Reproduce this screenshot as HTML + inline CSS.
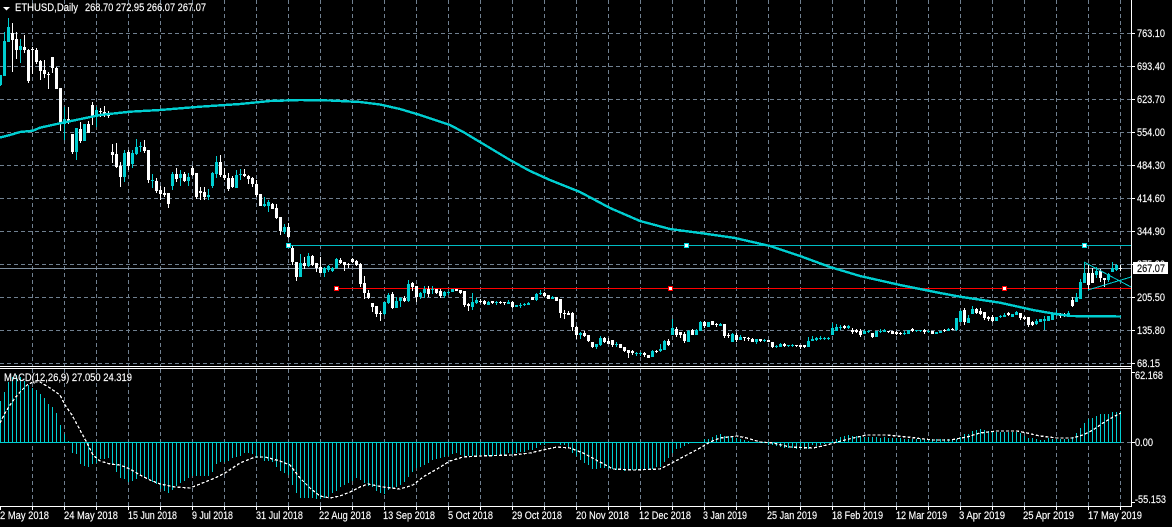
<!DOCTYPE html>
<html lang="en">
<head>
<meta charset="utf-8">
<title>ETHUSD,Daily</title>
<style>
html,body{margin:0;padding:0;background:#000;width:1172px;height:527px;overflow:hidden}
svg{display:block}
text{font-family:"Liberation Sans",sans-serif;font-size:11px;fill:#fff;stroke:#fff;stroke-width:.15}
</style>
</head>
<body>
<svg width="1172" height="527" viewBox="0 0 1172 527" xmlns="http://www.w3.org/2000/svg">
<rect width="1172" height="527" fill="#000"/>
<g shape-rendering="crispEdges" fill="none">
<!-- grid -->
<path stroke="#708090" stroke-dasharray="4 3" d="M32.5 0V366M64.5 0V366M96.5 0V366M128.5 0V366M160.5 0V366M192.5 0V366M224.5 0V366M256.5 0V366M288.5 0V366M320.5 0V366M352.5 0V366M384.5 0V366M416.5 0V366M448.5 0V366M480.5 0V366M512.5 0V366M544.5 0V366M576.5 0V366M608.5 0V366M640.5 0V366M672.5 0V366M704.5 0V366M736.5 0V366M768.5 0V366M800.5 0V366M832.5 0V366M864.5 0V366M896.5 0V366M928.5 0V366M960.5 0V366M992.5 0V366M1024.5 0V366M1056.5 0V366M1088.5 0V366M1120.5 0V366M32.5 369V506M64.5 369V506M96.5 369V506M128.5 369V506M160.5 369V506M192.5 369V506M224.5 369V506M256.5 369V506M288.5 369V506M320.5 369V506M352.5 369V506M384.5 369V506M416.5 369V506M448.5 369V506M480.5 369V506M512.5 369V506M544.5 369V506M576.5 369V506M608.5 369V506M640.5 369V506M672.5 369V506M704.5 369V506M736.5 369V506M768.5 369V506M800.5 369V506M832.5 369V506M864.5 369V506M896.5 369V506M928.5 369V506M960.5 369V506M992.5 369V506M1024.5 369V506M1056.5 369V506M1088.5 369V506M1120.5 369V506"/>
<path stroke="#708090" stroke-dasharray="4 3" d="M0 33.5H1131M0 66.5H1131M0 99.5H1131M0 132.5H1131M0 165.5H1131M0 198.5H1131M0 231.5H1131M0 264.5H1131M0 297.5H1131M0 330.5H1131M0 363.5H1131M1120 442.5H1131"/>
<!-- horizontal objects -->
<path stroke="#8090a0" d="M0 268.5H1131"/>
<path stroke="#00bcc4" d="M288 245.5H1131"/>
<path stroke="#ff0000" d="M336 288.5H1131"/>
<!-- white candles: wicks -->
<path stroke="#fff" d="M12.5 23V72M16.5 32V59M24.5 35V53M28.5 49V83M32.5 47V74M36.5 48V64M40.5 60V80M44.5 60V78M48.5 72V89M52.5 57V73M56.5 67V89M60.5 88V131M68.5 107V124M72.5 134V154M80.5 122V143M88.5 121V133M92.5 102V125M100.5 108V117M104.5 106V117M108.5 111V118M112.5 144V163M116.5 143V168M120.5 162V187M128.5 150V170M144.5 140V153M148.5 150V183M156.5 178V193M160.5 186V200M164.5 187V197M168.5 193V208M176.5 168V182M184.5 172V182M192.5 166V176M196.5 173V199M200.5 187V200M204.5 187V200M220.5 155V177M224.5 168V180M228.5 173V191M232.5 176V188M244.5 169V177M248.5 175V184M252.5 177V187M256.5 180V197M260.5 194V206M272.5 203V209M276.5 204V219M280.5 217V235M288.5 223V238M292.5 246V265M296.5 262V281M304.5 257V269M312.5 255V266M316.5 263V272M320.5 257V273M340.5 258V264M344.5 262V271M348.5 263V268M352.5 258V263M356.5 260V266M360.5 263V287M364.5 276V299M368.5 290V299M372.5 303V312M376.5 306V317M380.5 311V321M392.5 292V309M404.5 296V302M412.5 282V291M416.5 286V302M428.5 286V297M436.5 289V294M440.5 289V298M456.5 289V291M460.5 290V294M464.5 291V307M468.5 303V311M480.5 299V303M484.5 300V305M492.5 301V304M500.5 301V304M504.5 302V305M512.5 301V308M532.5 297V300M544.5 292V297M548.5 295V299M556.5 297V301M560.5 299V318M564.5 310V319M568.5 311V315M572.5 312V331M576.5 326V339M584.5 331V337M588.5 335V342M592.5 342V348M604.5 337V343M608.5 338V344M612.5 340V347M620.5 344V348M624.5 347V352M628.5 350V358M632.5 350V355M644.5 352V357M648.5 355V358M656.5 350V353M668.5 339V346M676.5 327V337M680.5 332V338M684.5 332V343M692.5 329V335M704.5 321V328M712.5 321V325M716.5 323V327M724.5 324V338M728.5 333V338M736.5 333V342M744.5 337V341M748.5 337V341M752.5 338V342M760.5 339V342M768.5 340V342M772.5 342V348M784.5 343V347M796.5 345V347M800.5 345V349M804.5 345V348M844.5 325V329M852.5 328V334M856.5 329V333M860.5 329V337M872.5 333V338M888.5 331V333M892.5 331V334M896.5 331V335M900.5 332V335M912.5 328V332M924.5 329V334M932.5 331V334M944.5 329V332M952.5 328V330M964.5 308V325M976.5 308V314M980.5 308V315M984.5 312V320M988.5 316V321M992.5 315V322M1008.5 312V316M1020.5 313V320M1024.5 316V320M1028.5 317V327M1032.5 321V326M1060.5 313V318M1064.5 313V317M1072.5 297V307M1088.5 265V289M1092.5 268V283M1100.5 269V282M1104.5 278V287M1120.5 265V271"/>
<!-- white candles: bodies -->
<path stroke="#fff" stroke-width="3" d="M12.5 33V40M16.5 39V50M24.5 47V50M28.5 50V81M32.5 49V50M36.5 50V62M40.5 61V71M44.5 70V74M48.5 74V75M52.5 57V68M56.5 68V89M60.5 88V122M68.5 119V122M72.5 134V152M80.5 129V141M88.5 124V133M92.5 105V117M100.5 111V112M104.5 112V115M108.5 114V116M112.5 152V155M116.5 154V167M120.5 166V177M128.5 152V166M144.5 147V151M148.5 150V180M156.5 181V191M160.5 190V194M164.5 193V195M168.5 193V204M176.5 174V179M184.5 174V181M192.5 168V175M196.5 173V197M200.5 191V193M204.5 192V197M220.5 162V175M224.5 175V178M228.5 178V189M232.5 178V187M244.5 174V176M248.5 176V179M252.5 178V184M256.5 184V195M260.5 194V206M272.5 204V209M276.5 208V218M280.5 217V231M288.5 227V237M292.5 248V262M296.5 262V277M304.5 263V266M312.5 256V265M316.5 263V268M320.5 267V273M340.5 260V263M344.5 262V265M348.5 264V265M352.5 259V262M356.5 261V265M360.5 264V284M364.5 283V293M368.5 293V298M372.5 303V307M376.5 306V314M380.5 313V314M392.5 294V308M404.5 298V301M412.5 283V287M416.5 286V297M428.5 289V294M436.5 289V293M440.5 291V296M456.5 289V291M460.5 290V293M464.5 291V305M468.5 304V306M480.5 301V302M484.5 301V304M492.5 301V303M500.5 302V303M504.5 302V303M512.5 302V307M532.5 297V300M544.5 293V296M548.5 295V299M556.5 297V301M560.5 299V313M564.5 313V314M568.5 313V315M572.5 313V327M576.5 327V335M584.5 333V336M588.5 335V341M592.5 342V347M604.5 338V342M608.5 341V344M612.5 340V345M620.5 344V348M624.5 347V351M628.5 350V353M632.5 351V353M644.5 353V355M648.5 355V358M656.5 351V352M668.5 341V345M676.5 329V335M680.5 332V335M684.5 334V341M692.5 330V335M704.5 322V326M712.5 321V325M716.5 324V325M724.5 324V336M728.5 335V336M736.5 335V340M744.5 337V338M748.5 338V339M752.5 339V342M760.5 339V341M768.5 340V342M772.5 342V347M784.5 344V346M796.5 345V346M800.5 345V347M804.5 345V347M844.5 326V328M852.5 330V332M856.5 330V332M860.5 331V335M872.5 333V337M888.5 331V332M892.5 331V334M896.5 332V334M900.5 333V334M912.5 329V331M924.5 330V332M932.5 331V334M944.5 330V331M952.5 329V330M964.5 310V322M976.5 309V313M980.5 311V314M984.5 312V318M988.5 317V319M992.5 317V321M1008.5 313V315M1020.5 313V318M1024.5 317V319M1028.5 317V325M1032.5 322V325M1060.5 314V316M1064.5 315V316M1072.5 300V306M1088.5 273V285M1092.5 273V283M1100.5 271V278M1104.5 278V280M1120.5 268V269"/>
<!-- cyan candles: wicks -->
<path stroke="#00ced1" d="M.5 75V86M4.5 32V76M8.5 18V42M20.5 39V63M64.5 107V140M76.5 128V160M84.5 124V141M96.5 107V127M124.5 150V182M132.5 150V168M136.5 139V155M140.5 142V152M152.5 174V188M172.5 172V190M180.5 170V186M188.5 173V186M208.5 189V200M212.5 172V188M216.5 156V178M236.5 170V188M240.5 169V180M264.5 197V207M268.5 200V212M284.5 224V234M300.5 254V277M308.5 253V267M324.5 267V277M328.5 265V272M332.5 267V272M336.5 258V269M384.5 302V315M388.5 293V304M396.5 297V308M400.5 297V307M408.5 280V302M420.5 292V299M424.5 286V298M432.5 286V294M444.5 291V298M448.5 291V295M452.5 289V292M472.5 293V310M476.5 298V304M488.5 301V305M496.5 301V305M508.5 300V304M516.5 305V307M520.5 303V308M524.5 303V306M528.5 302V305M536.5 293V301M540.5 290V295M552.5 296V299M580.5 332V339M596.5 344V349M600.5 336V346M616.5 342V347M636.5 352V356M640.5 352V356M652.5 350V357M660.5 344V352M664.5 340V350M672.5 319V335M688.5 330V342M696.5 329V335M700.5 321V331M708.5 322V327M720.5 323V326M732.5 333V342M740.5 335V340M756.5 339V344M764.5 339V342M776.5 345V348M780.5 343V347M788.5 345V347M792.5 344V347M808.5 337V347M812.5 336V341M816.5 337V341M820.5 336V340M824.5 337V340M828.5 337V340M832.5 323V335M836.5 324V331M840.5 325V330M848.5 325V329M864.5 330V334M868.5 330V333M876.5 331V337M880.5 329V333M884.5 329V332M904.5 331V335M908.5 330V334M916.5 330V332M920.5 330V332M928.5 330V333M936.5 332V334M940.5 331V333M948.5 328V331M956.5 318V331M960.5 310V322M968.5 315V323M972.5 306V314M996.5 317V321M1000.5 315V318M1004.5 313V317M1012.5 314V317M1016.5 311V315M1036.5 319V325M1040.5 319V322M1044.5 316V330M1048.5 316V321M1052.5 313V320M1056.5 310V316M1068.5 311V316M1076.5 293V302M1080.5 279V299M1084.5 262V283M1096.5 267V278M1108.5 273V282M1112.5 262V272M1116.5 264V271"/>
<!-- cyan candles: bodies -->
<path stroke="#00ced1" stroke-width="3" d="M.5 75V85M4.5 41V76M8.5 27V42M20.5 46V50M64.5 119V124M76.5 128V152M84.5 124V141M96.5 110V117M124.5 153V177M132.5 153V164M136.5 147V154M140.5 146V147M152.5 180V181M172.5 174V186M180.5 174V178M188.5 177V181M208.5 195V197M212.5 173V186M216.5 162V174M236.5 175V188M240.5 174V175M264.5 204V206M268.5 202V206M284.5 227V232M300.5 263V277M308.5 256V266M324.5 268V273M328.5 266V270M332.5 268V271M336.5 259V268M384.5 302V314M388.5 295V303M396.5 301V308M400.5 298V301M408.5 284V301M420.5 293V297M424.5 289V293M432.5 289V290M444.5 292V296M448.5 292V293M452.5 289V292M472.5 302V307M476.5 300V303M488.5 302V305M496.5 302V303M508.5 302V304M516.5 305V307M520.5 305V306M524.5 304V305M528.5 303V305M536.5 294V300M540.5 293V294M552.5 297V299M580.5 333V335M596.5 344V347M600.5 338V345M616.5 344V345M636.5 353V354M640.5 353V354M652.5 351V357M660.5 349V351M664.5 341V350M672.5 328V335M688.5 331V342M696.5 330V335M700.5 322V331M708.5 322V327M720.5 324V326M732.5 334V342M740.5 337V340M756.5 339V342M764.5 340V341M776.5 346V347M780.5 344V347M788.5 345V346M792.5 345V346M808.5 341V347M812.5 339V341M816.5 338V340M820.5 338V339M824.5 338V339M828.5 338V339M832.5 328V335M836.5 327V331M840.5 327V328M848.5 326V328M864.5 331V334M868.5 331V332M876.5 331V337M880.5 331V332M884.5 330V332M904.5 333V334M908.5 330V334M916.5 330V331M920.5 330V331M928.5 331V332M936.5 332V334M940.5 331V333M948.5 329V331M956.5 318V330M960.5 311V322M968.5 318V323M972.5 309V314M996.5 317V321M1000.5 316V317M1004.5 315V317M1012.5 314V317M1016.5 312V315M1036.5 321V324M1040.5 319V322M1044.5 319V321M1048.5 316V321M1052.5 313V320M1056.5 313V315M1068.5 313V315M1076.5 297V302M1080.5 282V299M1084.5 273V283M1096.5 271V275M1108.5 274V280M1112.5 268V272M1116.5 265V270"/>
<!-- moving average -->
<polyline stroke="#00ced1" stroke-width="2.4" points="0,137.5 10,135 20,132 33,130.7 40,127.7 60,123.3 100,115 130,111.7 160,110 200,106.7 240,104 270,101 300,100 330,100.5 360,102 380,104.5 400,109 420,115 450,125 465,133 480,142 510,160 530,171 550,180 580,192 610,208 640,221 670,229 700,233 735,238 770,246 800,256 830,267 860,276 900,285 940,293 960,296.7 1000,302.7 1033,310 1050,313 1070,316 1121,316.5"/>
<!-- triangle -->
<path stroke="#00ced1" d="M1084 262L1131 287M1088 290L1131 277"/>
<!-- object anchors -->
<path fill="#fff" stroke="#00e0e6" d="M286.5 243.5h4v4h-4zM684.5 243.5h4v4h-4zM1082.5 243.5h4v4h-4z"/>
<path fill="#fff" stroke="#ff0000" d="M334.5 286.5h4v4h-4zM668.5 286.5h4v4h-4zM1002.5 286.5h4v4h-4z"/>
<!-- separators -->
<path stroke="#fff" d="M0 366.5H1132M0 368.5H1132M0 506.5H1132M1131.5 0V507"/>
<path stroke="#fff" d="M1131 33.5h4M1131 66.5h4M1131 99.5h4M1131 132.5h4M1131 165.5h4M1131 198.5h4M1131 231.5h4M1131 264.5h4M1131 297.5h4M1131 330.5h4M1131 363.5h4M1131 372.5h4M1131 442.5h4M1131 502.5h4"/>
<path stroke="#fff" d="M.5 506V510M32.5 506V510M64.5 506V510M96.5 506V510M128.5 506V510M160.5 506V510M192.5 506V510M224.5 506V510M256.5 506V510M288.5 506V510M320.5 506V510M352.5 506V510M384.5 506V510M416.5 506V510M448.5 506V510M480.5 506V510M512.5 506V510M544.5 506V510M576.5 506V510M608.5 506V510M640.5 506V510M672.5 506V510M704.5 506V510M736.5 506V510M768.5 506V510M800.5 506V510M832.5 506V510M864.5 506V510M896.5 506V510M928.5 506V510M960.5 506V510M992.5 506V510M1024.5 506V510M1056.5 506V510M1088.5 506V510M1120.5 506V510"/>
<!-- MACD -->
<path stroke="#00ced1" d="M0 442.5H1121M.5 442V401M4.5 442V392M8.5 442V382M12.5 442V377M16.5 442V375M20.5 442V377M24.5 442V381M28.5 442V385M32.5 442V388M36.5 442V390M40.5 442V394M44.5 442V398M48.5 442V404M52.5 442V407M56.5 442V413M60.5 442V425M64.5 442V434M68.5 442V441M72.5 442V453M76.5 442V454M80.5 442V464M84.5 442V466M88.5 442V467M92.5 442V464M96.5 442V463M100.5 442V459M104.5 442V459M108.5 442V458M112.5 442V464M116.5 442V472M120.5 442V478M124.5 442V479M128.5 442V482M132.5 442V481M136.5 442V479M140.5 442V476M144.5 442V478M148.5 442V479M152.5 442V482M156.5 442V484M160.5 442V489M164.5 442V491M168.5 442V493M172.5 442V490M176.5 442V486M180.5 442V483M184.5 442V481M188.5 442V478M192.5 442V476M196.5 442V476M200.5 442V476M204.5 442V476M208.5 442V476M212.5 442V472M216.5 442V464M220.5 442V462M224.5 442V462M228.5 442V461M232.5 442V458M236.5 442V457M240.5 442V456M244.5 442V453M248.5 442V453M252.5 442V454M256.5 442V458M260.5 442V458M264.5 442V461M268.5 442V461M272.5 442V462M276.5 442V467M280.5 442V471M284.5 442V473M288.5 442V475M292.5 442V485M296.5 442V493M300.5 442V498M304.5 442V498M308.5 442V498M312.5 442V498M316.5 442V499M320.5 442V499M324.5 442V498M328.5 442V497M332.5 442V493M336.5 442V491M340.5 442V487M344.5 442V485M348.5 442V483M352.5 442V481M356.5 442V478M360.5 442V480M364.5 442V483M368.5 442V486M372.5 442V487M376.5 442V491M380.5 442V493M384.5 442V494M388.5 442V490M392.5 442V488M396.5 442V487M400.5 442V485M404.5 442V482M408.5 442V477M412.5 442V472M416.5 442V468M420.5 442V467M424.5 442V465M428.5 442V463M432.5 442V460M436.5 442V459M440.5 442V458M444.5 442V457M448.5 442V456M452.5 442V454M456.5 442V453M460.5 442V455M464.5 442V456M468.5 442V456M472.5 442V456M476.5 442V456M480.5 442V456M484.5 442V455M488.5 442V456M492.5 442V456M496.5 442V456M500.5 442V455M504.5 442V455M508.5 442V453M512.5 442V454M516.5 442V453M520.5 442V452M524.5 442V452M528.5 442V450M532.5 442V450M536.5 442V448M540.5 442V445M544.5 442V445M548.5 442V443M552.5 442V443M556.5 442V443M560.5 442V445M564.5 442V445M568.5 442V447M572.5 442V453M576.5 442V456M580.5 442V460M584.5 442V463M588.5 442V465M592.5 442V469M596.5 442V469M600.5 442V468M604.5 442V468M608.5 442V469M612.5 442V469M616.5 442V470M620.5 442V470M624.5 442V471M628.5 442V470M632.5 442V470M636.5 442V470M640.5 442V470M644.5 442V469M648.5 442V469M652.5 442V469M656.5 442V467M660.5 442V467M664.5 442V462M668.5 442V458M672.5 442V453M676.5 442V449M680.5 442V448M684.5 442V446M688.5 442V444M692.5 442V443M696.5 442V443M700.5 442V442M704.5 442V439M708.5 442V439M712.5 442V437M716.5 442V435M720.5 442V434M724.5 442V436M728.5 442V436M732.5 442V437M736.5 442V438M740.5 442V439M744.5 442V440M748.5 442V441M752.5 442V443M756.5 442V443M760.5 442V443M764.5 442V443M768.5 442V445M772.5 442V445M776.5 442V446M780.5 442V447M784.5 442V448M788.5 442V448M792.5 442V448M796.5 442V449M800.5 442V449M804.5 442V449M808.5 442V449M812.5 442V445M816.5 442V446M820.5 442V445M824.5 442V444M828.5 442V443M832.5 442V441M836.5 442V439M840.5 442V437M844.5 442V436M848.5 442V435M852.5 442V436M856.5 442V436M860.5 442V436M864.5 442V437M868.5 442V437M872.5 442V437M876.5 442V437M880.5 442V438M884.5 442V437M888.5 442V438M892.5 442V438M896.5 442V438M900.5 442V438M904.5 442V439M908.5 442V439M912.5 442V439M916.5 442V439M920.5 442V439M924.5 442V439M928.5 442V439M932.5 442V439M936.5 442V439M940.5 442V439M944.5 442V439M948.5 442V439M952.5 442V440M956.5 442V439M960.5 442V437M964.5 442V434M968.5 442V434M972.5 442V431M976.5 442V430M980.5 442V429M984.5 442V430M988.5 442V431M992.5 442V431M996.5 442V432M1000.5 442V432M1004.5 442V432M1008.5 442V432M1012.5 442V432M1016.5 442V432M1020.5 442V433M1024.5 442V436M1028.5 442V438M1032.5 442V438M1036.5 442V439M1040.5 442V440M1044.5 442V440M1048.5 442V438M1052.5 442V439M1056.5 442V439M1060.5 442V439M1064.5 442V439M1068.5 442V439M1072.5 442V437M1076.5 442V433M1080.5 442V428M1084.5 442V423M1088.5 442V419M1092.5 442V418M1096.5 442V416M1100.5 442V414M1104.5 442V414M1108.5 442V414M1112.5 442V412M1116.5 442V412M1120.5 442V411"/>
<polyline stroke="#fff" stroke-width="1.3" stroke-dasharray="3 2" points="0,423 5,413 10,405 15,398 20,392 27,385 33,382 40,382 50,388 60,395 65,405 72,415 80,430 87,443 93,455 100,461 110,464 120,465 130,469 140,475 150,480 160,484 175,487 190,488 200,484 215,478 225,473 240,463 255,457 265,457 280,461 290,465 300,478 310,488 320,496 330,498 340,496 350,492 360,487 368,484 383,487 400,489 413,485 423,477 437,469 450,461 463,457 480,456 513,455 530,453 543,450 557,447 570,448 583,453 600,462 613,469 633,470 660,469 670,464 683,457 700,448 710,442 720,438 737,436 747,438 760,442 773,443 790,447 813,448 827,445 837,442 853,438 867,435 887,435 907,437 933,440 950,440 967,437 980,433 997,431 1017,431 1027,433 1040,436 1057,438 1073,438 1083,435 1093,430 1103,423 1113,417 1121,413"/>
</g>
<!-- title -->
<polygon points="3,7 10,7 6.5,10.5" fill="#fff"/>
<text x="15" y="11" textLength="63" lengthAdjust="spacingAndGlyphs">ETHUSD,Daily</text>
<text x="85" y="11" textLength="121" lengthAdjust="spacingAndGlyphs">268.70 272.95 266.07 267.07</text>
<text x="4" y="381" textLength="128" lengthAdjust="spacingAndGlyphs">MACD(12,26,9) 27.050 24.319</text>
<!-- price labels -->
<text x="1137" y="37" textLength="28" lengthAdjust="spacingAndGlyphs">763.10</text>
<text x="1137" y="70" textLength="28" lengthAdjust="spacingAndGlyphs">693.40</text>
<text x="1137" y="103" textLength="28" lengthAdjust="spacingAndGlyphs">623.70</text>
<text x="1137" y="136" textLength="28" lengthAdjust="spacingAndGlyphs">554.00</text>
<text x="1137" y="169" textLength="28" lengthAdjust="spacingAndGlyphs">484.30</text>
<text x="1137" y="202" textLength="28" lengthAdjust="spacingAndGlyphs">414.60</text>
<text x="1137" y="235" textLength="28" lengthAdjust="spacingAndGlyphs">344.90</text>
<text x="1137" y="268" textLength="28" lengthAdjust="spacingAndGlyphs">275.20</text>
<rect x="1133" y="262" width="35" height="12" fill="#fff"/>
<text x="1137" y="272" textLength="28" lengthAdjust="spacingAndGlyphs" style="fill:#000;stroke:#000">267.07</text>
<text x="1137" y="301" textLength="28" lengthAdjust="spacingAndGlyphs">205.50</text>
<text x="1137" y="334" textLength="28" lengthAdjust="spacingAndGlyphs">135.80</text>
<text x="1137" y="367" textLength="23" lengthAdjust="spacingAndGlyphs">68.15</text>
<text x="1135" y="379" textLength="28" lengthAdjust="spacingAndGlyphs">62.168</text>
<text x="1135" y="446" textLength="18" lengthAdjust="spacingAndGlyphs">0.00</text>
<text x="1135" y="503" textLength="31" lengthAdjust="spacingAndGlyphs">-55.153</text>
<!-- date labels -->
<text x="0" y="519" textLength="49" lengthAdjust="spacingAndGlyphs">2 May 2018</text>
<text x="64" y="519" textLength="54" lengthAdjust="spacingAndGlyphs">24 May 2018</text>
<text x="128" y="519" textLength="49" lengthAdjust="spacingAndGlyphs">15 Jun 2018</text>
<text x="192" y="519" textLength="41" lengthAdjust="spacingAndGlyphs">9 Jul 2018</text>
<text x="256" y="519" textLength="47" lengthAdjust="spacingAndGlyphs">31 Jul 2018</text>
<text x="319" y="519" textLength="52" lengthAdjust="spacingAndGlyphs">22 Aug 2018</text>
<text x="383" y="519" textLength="52" lengthAdjust="spacingAndGlyphs">13 Sep 2018</text>
<text x="448" y="519" textLength="45" lengthAdjust="spacingAndGlyphs">5 Oct 2018</text>
<text x="512" y="519" textLength="50" lengthAdjust="spacingAndGlyphs">29 Oct 2018</text>
<text x="576" y="519" textLength="53" lengthAdjust="spacingAndGlyphs">20 Nov 2018</text>
<text x="639" y="519" textLength="52" lengthAdjust="spacingAndGlyphs">12 Dec 2018</text>
<text x="703" y="519" textLength="44" lengthAdjust="spacingAndGlyphs">3 Jan 2019</text>
<text x="767" y="519" textLength="50" lengthAdjust="spacingAndGlyphs">25 Jan 2019</text>
<text x="832" y="519" textLength="51" lengthAdjust="spacingAndGlyphs">18 Feb 2019</text>
<text x="896" y="519" textLength="51" lengthAdjust="spacingAndGlyphs">12 Mar 2019</text>
<text x="959" y="519" textLength="46" lengthAdjust="spacingAndGlyphs">3 Apr 2019</text>
<text x="1023" y="519" textLength="51" lengthAdjust="spacingAndGlyphs">25 Apr 2019</text>
<text x="1088" y="519" textLength="54" lengthAdjust="spacingAndGlyphs">17 May 2019</text>
</svg>
</body>
</html>
